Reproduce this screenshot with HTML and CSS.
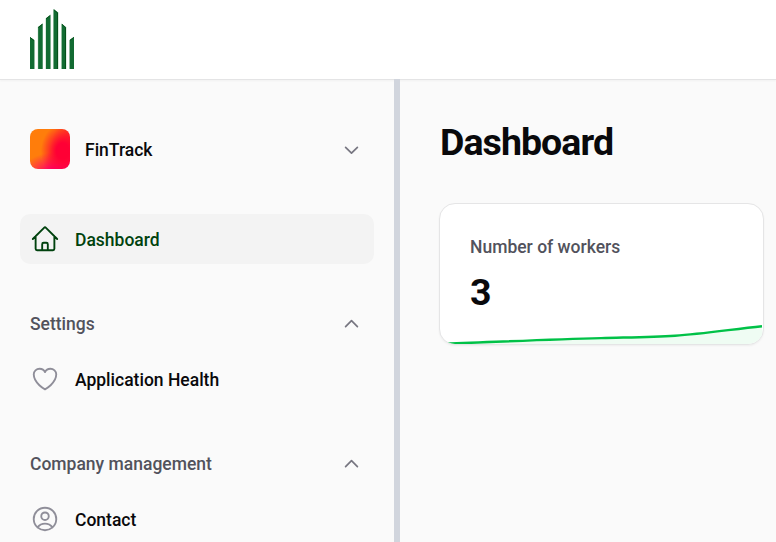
FILE: index.html
```html
<!DOCTYPE html>
<html lang="en">
<head>
<meta charset="utf-8">
<title>Dashboard</title>
<link rel="stylesheet" href="styles.css">
</head>
<body>
<header class="topbar">
  <svg class="logo" width="44" height="60" viewBox="0 0 44 60" aria-hidden="true">
    <g class="logo-light">
      <path d="M0 28L4.8 31.3V60H0zM7.8 18L12.7 14.5V60H7.8zM15.6 9.4L20.6 5.5V60H15.6zM23.4 0L28.4 3.6V60H23.4zM31.3 14.5L36.3 18V60H31.3zM39.2 31.3L44 27.7V60H39.2z"/>
    </g>
    <g class="logo-main">
      <path d="M0 28L4.2 31.3V60H0zM8.2 18L12.6 14.8V60H8.2zM16 9.2L20.4 6.2V60H16zM23.6 0.3L28 3.6V60H23.6zM31.8 14.8L36 18.5V60H31.8zM39.8 31L44 28V60H39.8z"/>
    </g>
    <g class="logo-shade">
      <path d="M0.2 28.5L4 31.5M8.4 18.5L12.4 15.2M16.2 9.7L20.2 6.5M24 0.8L27.5 4V60M32 15.3L35.5 18.7V60M40 31.3L43.8 28.4"/>
    </g>
  </svg>
</header>
<div class="layout">
  <aside class="sidebar">
    <div class="tenant">
      <span class="avatar"></span>
      <span class="tenant-name">FinTrack</span>
      <svg class="chevron" viewBox="0 0 25 25"><path d="M6.6 10.3L12.5 16.2L18.4 10.3"/></svg>
    </div>
    <nav class="nav">
      <a class="item active">
        <svg class="icon" viewBox="0 0 24 24"><path d="m2.25 12 8.954-8.955c.44-.439 1.152-.439 1.591 0L21.75 12M4.5 9.75v10.125c0 .621.504 1.125 1.125 1.125H9.75v-4.875c0-.621.504-1.125 1.125-1.125h2.25c.621 0 1.125.504 1.125 1.125V21h4.125c.621 0 1.125-.504 1.125-1.125V9.75M8.25 21h8.25"/></svg>
        <span class="item-label">Dashboard</span>
      </a>
      <section class="group">
        <div class="group-head"><span>Settings</span><svg class="chevron" viewBox="0 0 25 25"><path d="M6.6 14.6L12.5 8.7L18.4 14.6"/></svg></div>
        <a class="item">
          <svg class="icon" viewBox="0 0 24 24"><path d="M21 8.25c0-2.485-2.099-4.5-4.688-4.5-1.935 0-3.597 1.126-4.312 2.733-.715-1.607-2.377-2.733-4.313-2.733C5.1 3.75 3 5.765 3 8.25c0 7.22 9 12 9 12s9-4.78 9-12Z"/></svg>
          <span class="item-label">Application Health</span>
        </a>
      </section>
      <section class="group">
        <div class="group-head"><span>Company management</span><svg class="chevron" viewBox="0 0 25 25"><path d="M6.6 14.6L12.5 8.7L18.4 14.6"/></svg></div>
        <a class="item">
          <svg class="icon" viewBox="0 0 24 24"><path d="M17.982 18.725A7.488 7.488 0 0 0 12 15.75a7.488 7.488 0 0 0-5.982 2.975m11.963 0a9 9 0 1 0-11.963 0m11.963 0A8.966 8.966 0 0 1 12 21a8.966 8.966 0 0 1-5.982-2.275M15 9.75a3 3 0 1 1-6 0 3 3 0 0 1 6 0Z"/></svg>
          <span class="item-label">Contact</span>
        </a>
      </section>
    </nav>
  </aside>
  <main class="main">
    <h1>Dashboard</h1>
    <section class="card">
      <div class="label">Number of workers</div>
      <div class="value">3</div>
      <svg class="chart" viewBox="0 0 323 20">
        <path class="area" d="M0 20C55 18 108 15.4 161 14.1C190 13.3 212 13.1 235 11.7C262 10 292 5.3 322 2.2L323 20z"/>
        <path class="line" d="M0 20C55 18 108 15.4 161 14.1C190 13.3 212 13.1 235 11.7C262 10 292 5.3 322 2.2"/>
      </svg>
    </section>
  </main>
</div>
</body>
</html>
```
FILE: styles.css
```css
* { box-sizing: border-box; }
body {
  margin: 0;
  height: 542px;
  overflow: hidden;
  display: flex;
  flex-direction: column;
  background: #fafafa;
  color: #09090b;
  font: 500 17.5px/25px Roboto, sans-serif;
}
.topbar {
  flex: none;
  height: 79px;
  padding: 9px 30px;
  background: #fff;
  box-shadow: 0 1px 0 #e4e4e5, 0 2px 2px rgba(0, 0, 0, .04);
  position: relative;
}
.logo { display: block; }
.logo-light { fill: #9fc5a9; }
.logo-main { fill: #126b32; }
.logo-shade { fill: none; stroke: #05501a; stroke-width: 1; }
.layout { display: flex; flex: 1; min-height: 0; }
.sidebar {
  width: 400px;
  flex: none;
  padding: 40px 20px 0;
  border-right: 6px solid #d1d5dd;
  position: relative;
  z-index: 1;
}
.tenant {
  display: flex;
  align-items: center;
  gap: 15px;
  height: 60px;
  padding: 0 10px;
}
.tenant-name { padding-top: 2px; }
.avatar {
  width: 40px;
  height: 40px;
  border-radius: 8px;
  background:
    radial-gradient(ellipse 22px 27px at 82% 55%, #ff0035 0 30%, rgba(255, 0, 53, 0) 100%),
    radial-gradient(ellipse 34px 20px at 65% 108%, #ff0068 20%, rgba(255, 0, 100, 0) 100%),
    linear-gradient(108deg, #ff7d0b 48%, #ff3020 82%, #ff0035);
}
.chevron {
  width: 25px;
  height: 25px;
  margin-left: auto;
  fill: none;
  stroke: #777681;
  stroke-width: 1.7;
  stroke-linecap: round;
  stroke-linejoin: round;
}
.nav { display: flex; flex-direction: column; gap: 35px; padding-top: 35px; }
.item {
  display: flex;
  align-items: center;
  gap: 15px;
  height: 50px;
  padding: 0 10px;
  border-radius: 10px;
  color: #09090b;
}
.item-label { padding-top: 2px; }
.item.active { background: #f3f3f3; color: #00420e; }
.icon {
  width: 30px;
  height: 30px;
  fill: none;
  stroke: #8f8e99;
  stroke-width: 1.5;
  stroke-linecap: round;
  stroke-linejoin: round;
}
.active .icon { stroke: #00420e; }
.group { display: flex; flex-direction: column; gap: 5px; }
.group-head {
  display: flex;
  align-items: center;
  height: 50px;
  padding: 0 10px;
  color: #52525c;
}
.main { padding: 41px 12px 0 39px; flex: 1; }
h1 {
  margin: 0 0 0 1px;
  font-size: 37.5px;
  line-height: 45px;
  font-weight: 700;
  letter-spacing: -.025em;
}
.card {
  display: flex;
  flex-direction: column;
  width: 325px;
  height: 142px;
  margin-top: 38px;
  border: 1px solid #e5e5e6;
  border-radius: 16px;
  background: #fff;
  box-shadow: 0 1px 2px rgba(0, 0, 0, .05);
  overflow: hidden;
}
.label { padding: 31px 30px 0; color: #52525c; }
.value {
  padding: 10px 30px 0;
  font-size: 37.5px;
  line-height: 45px;
  font-weight: 700;
  letter-spacing: -.025em;
}
.chart { display: block; width: 323px; height: 20px; margin-top: auto; }
.area { fill: #effcf3; }
.line { fill: none; stroke: #00c147; stroke-width: 2.4; }
```
